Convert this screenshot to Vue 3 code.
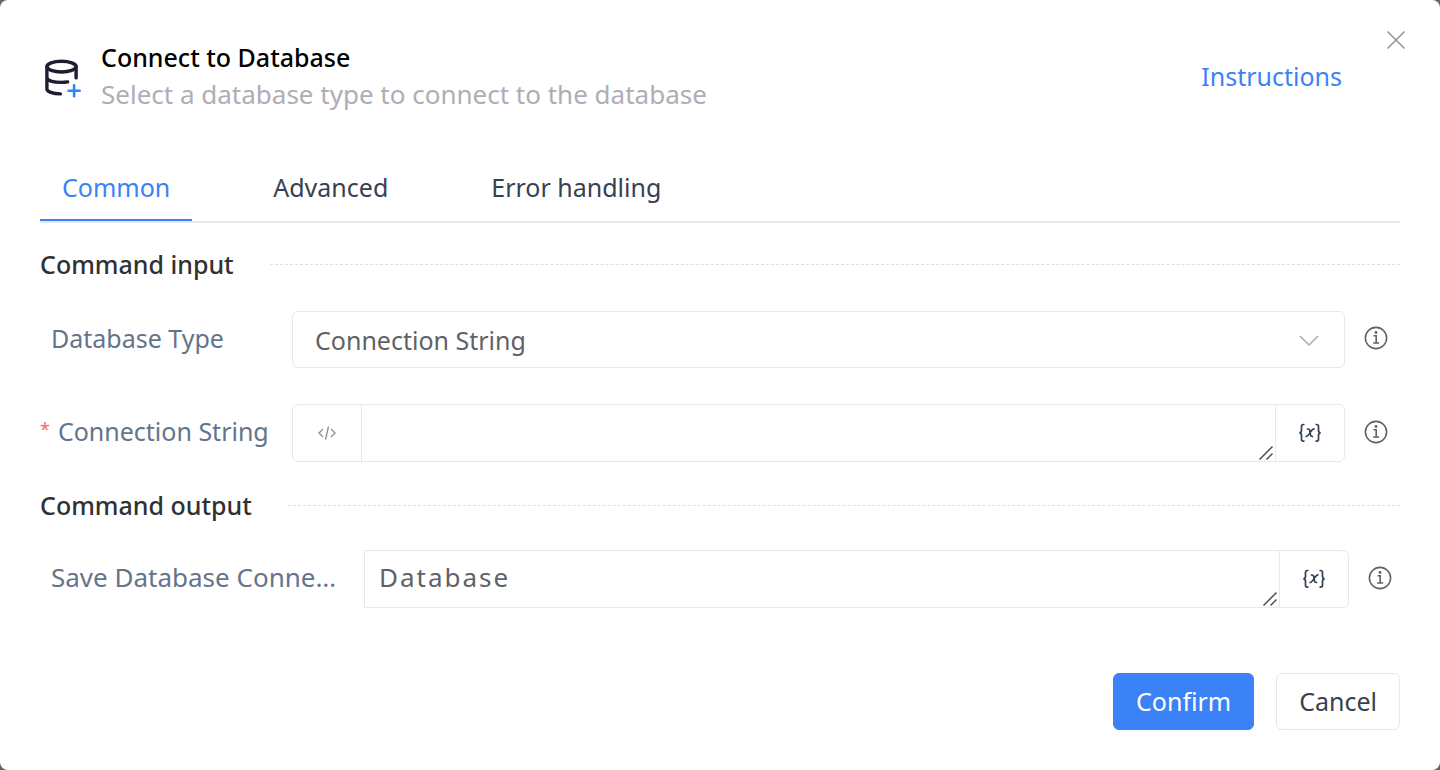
<script setup>
import { ref } from 'vue'

const tabs = ['Common', 'Advanced', 'Error handling']
const activeTab = ref('Common')
const databaseType = ref('Connection String')
const connectionString = ref('')
const outputName = ref('Database')
</script>

<template>
  <main class="dialog" role="dialog" aria-labelledby="dialog-title">
    <button class="close" type="button" aria-label="Close">
      <svg width="20" height="20" viewBox="0 0 20 20" fill="none" stroke="#909399" stroke-width="1.5">
        <path d="M1.5 1.5l17 17M18.5 1.5l-17 17" />
      </svg>
    </button>

    <header class="header">
      <svg class="db-icon" width="44" height="44" viewBox="0 0 44 44" fill="none" stroke="#211d30" stroke-width="3.4" stroke-linecap="round">
        <ellipse cx="21.5" cy="11.6" rx="14.6" ry="5.400" />
        <path d="M6.900 12v22.500c0 2.600 5.500 4.800 13.500 5M36.100 12v11.500M6.900 23.500c1 2.800 7 4.500 14.600 4.500 2.100 0 4.200-.2 6.200-.5" transform="translate(0 -.6)" />
        <path d="M34.100 30.300v11M28.500 35.800h11.200" stroke="#2d83ff" stroke-width="2.600" />
      </svg>
      <div class="titles">
        <h1 id="dialog-title">Connect to Database</h1>
        <p>Select a database type to connect to the database</p>
      </div>
      <a class="instructions" href="#instructions">Instructions</a>
    </header>

    <nav class="tabs" role="tablist">
      <button
        v-for="tab in tabs"
        :key="tab"
        type="button"
        role="tab"
        :aria-selected="tab === activeTab"
        :class="['tab', { active: tab === activeTab }]"
        @click="activeTab = tab"
      >{{ tab }}</button>
    </nav>

    <form class="form" @submit.prevent>
      <h2 class="section">Command input</h2>

      <div class="row">
        <label class="label" for="db-type">Database Type</label>
        <div class="control select">
          <select id="db-type" v-model="databaseType">
            <option>Connection String</option>
          </select>
          <svg class="chevron" width="20" height="12" viewBox="0 0 20 12" fill="none" stroke="#a8abb2" stroke-width="1.5">
            <path d="M1 1l9 9 9-9" />
          </svg>
        </div>
        <button class="info" type="button" aria-label="About Database Type">
          <svg width="24" height="24" viewBox="0 0 24 24" fill="none" stroke="#606266" stroke-width="1.6">
            <circle cx="12" cy="12" r="10.6" />
            <path d="M9.5 9.7h2.700v7.300M9.200 17h6" />
            <circle cx="12" cy="6.500" r="1.400" fill="#606266" stroke="none" />
          </svg>
        </button>
      </div>

      <div class="row">
        <label class="label required" for="conn-string"><span class="star">*</span>Connection String</label>
        <div class="control">
          <span class="prefix">
            <svg width="20" height="16" viewBox="0 0 20 16" fill="none" stroke="#909399" stroke-width="1.4">
              <path d="M6 4L2 8l4 4M14 4l4 4-4 4M11.500 1.500l-3 13" />
            </svg>
          </span>
          <div class="area">
            <textarea id="conn-string" v-model="connectionString" rows="1"></textarea>
            <svg class="grip" width="16" height="16" viewBox="0 0 16 16" fill="none" stroke="#4c4d4f" stroke-width="1.5">
              <path d="M1.500 14.500l13-13M8.500 14.500l6-6" />
            </svg>
          </div>
          <button class="variable" type="button" aria-label="Insert variable">
            <svg width="24" height="20" viewBox="0 0 24 20" fill="none" stroke="#334155" stroke-width="1.7">
              <path d="M6.500 1.500H5.300c-1.200 0-1.800.7-1.800 1.900v3.900c0 1.600-.6 2.500-2.200 2.500 1.600 0 2.200.9 2.200 2.500v3.900c0 1.200.6 1.900 1.800 1.900h1.200M17.500 1.500h1.200c1.200 0 1.800.7 1.800 1.900v3.900c0 1.600.6 2.500 2.200 2.500-1.600 0-2.200.9-2.200 2.500v3.900c0 1.200-.6 1.900-1.800 1.900h-1.200" />
              <path d="M8.800 6h1.400c.8 0 1.200.4 1.400 1.200l1 5c.2.900.6 1.300 1.400 1.300h1.200M16.500 5.900c-1.600-.3-2.700 1-4.300 3.500-1.800 2.900-2.800 4.500-4.700 4.100" />
            </svg>
          </button>
        </div>
        <button class="info" type="button" aria-label="About Connection String">
          <svg width="24" height="24" viewBox="0 0 24 24" fill="none" stroke="#606266" stroke-width="1.6">
            <circle cx="12" cy="12" r="10.6" />
            <path d="M9.5 9.7h2.700v7.300M9.200 17h6" />
            <circle cx="12" cy="6.500" r="1.400" fill="#606266" stroke="none" />
          </svg>
        </button>
      </div>

      <h2 class="section output-section">Command output</h2>

      <div class="row output">
        <label class="label" for="save-as">Save Database Conne…</label>
        <div class="control">
          <div class="area">
            <textarea id="save-as" v-model="outputName" rows="1"></textarea>
            <svg class="grip" width="16" height="16" viewBox="0 0 16 16" fill="none" stroke="#4c4d4f" stroke-width="1.5">
              <path d="M1.500 14.500l13-13M8.500 14.500l6-6" />
            </svg>
          </div>
          <button class="variable" type="button" aria-label="Insert variable">
            <svg width="24" height="20" viewBox="0 0 24 20" fill="none" stroke="#334155" stroke-width="1.7">
              <path d="M6.500 1.500H5.300c-1.200 0-1.800.7-1.800 1.900v3.900c0 1.600-.6 2.500-2.200 2.500 1.600 0 2.200.9 2.200 2.500v3.900c0 1.200.6 1.900 1.800 1.900h1.200M17.500 1.500h1.200c1.200 0 1.800.7 1.800 1.900v3.900c0 1.600.6 2.500 2.200 2.500-1.600 0-2.200.9-2.200 2.500v3.900c0 1.200-.6 1.900-1.800 1.900h-1.200" />
              <path d="M8.800 6h1.400c.8 0 1.200.4 1.400 1.200l1 5c.2.900.6 1.300 1.400 1.300h1.200M16.500 5.900c-1.600-.3-2.700 1-4.300 3.500-1.800 2.900-2.800 4.500-4.700 4.100" />
            </svg>
          </button>
        </div>
        <button class="info" type="button" aria-label="About the saved object">
          <svg width="24" height="24" viewBox="0 0 24 24" fill="none" stroke="#606266" stroke-width="1.6">
            <circle cx="12" cy="12" r="10.6" />
            <path d="M9.5 9.7h2.700v7.300M9.200 17h6" />
            <circle cx="12" cy="6.500" r="1.400" fill="#606266" stroke="none" />
          </svg>
        </button>
      </div>

      <footer class="footer">
        <button class="btn primary" type="submit">Confirm</button>
        <button class="btn" type="button">Cancel</button>
      </footer>
    </form>
  </main>
</template>

<style>
body {
  background: #666;
}
</style>

<style scoped>
.dialog,
.dialog * {
  box-sizing: border-box;
}
.dialog {
  position: relative;
  display: flex;
  flex-direction: column;
  min-height: 100vh;
  padding: 40px;
  border-radius: 8px;
  background: #fff;
  font-family: "Noto Sans", "Open Sans", sans-serif;
  font-size: 25px;
  line-height: 36px;
  color: #374151;
}
h1,
h2,
p {
  margin: 0;
}
button,
select,
textarea {
  margin: 0;
  padding: 0;
  border: 0;
  background: none;
  font: inherit;
  color: inherit;
}
svg {
  display: block;
}
.close {
  position: absolute;
  top: 30px;
  right: 34px;
}
.header {
  display: flex;
  align-items: center;
  padding-right: 58px;
}
.db-icon {
  flex: none;
  margin-right: 17px;
}
.titles {
  flex: 1;
}
h1 {
  font-size: 25px;
  font-weight: 500;
  line-height: 34px;
  color: #000;
}
.titles p {
  font-size: 26px;
  line-height: 40px;
  color: #afadb5;
}
.instructions {
  padding-bottom: 2px;
  color: #3b82f6;
  text-decoration: none;
}
.tabs {
  display: flex;
  gap: 59px;
  margin-top: 40px;
  border-bottom: 2px solid #e4e7ed;
}
.tab {
  height: 67px;
  padding: 0 22px;
  border-bottom: 2px solid transparent;
}
.tab.active {
  border-color: #3b82f6;
  color: #3b82f6;
}
.form {
  display: flex;
  flex: 1;
  flex-direction: column;
}
.section {
  display: flex;
  align-items: center;
  gap: 36px;
  margin: 23px 0 29px;
  font-size: 25px;
  font-weight: 500;
  color: #303133;
}
.output-section {
  margin: 25px 0 27px;
}
.section::after {
  content: "";
  flex: 1;
  border-top: 1px dashed #dcdfe6;
}
.row {
  display: flex;
  align-items: center;
}
.row + .row {
  margin-top: 36px;
}
.label {
  flex: none;
  width: 252px;
  padding: 0 0 4px 11px;
  color: #64748b;
  white-space: nowrap;
}
.label.required {
  display: flex;
  padding-left: 0;
}
.star {
  margin-right: 8px;
  font-size: 18px;
  line-height: 32px;
  color: #f56c6c;
}
.output .label {
  width: 300px;
  margin-right: 24px;
  font-size: 26px;
}
.control {
  position: relative;
  display: flex;
  flex: 1;
  height: 58px;
  border: 1px solid #e4e7ed;
  border-radius: 6px;
  color: #606266;
}
.control.select {
  height: 57px;
}
.select select {
  flex: 1;
  appearance: none;
  padding: 0 22px;
}
.chevron {
  position: absolute;
  top: 23px;
  right: 25px;
  pointer-events: none;
}
.prefix,
.variable {
  display: flex;
  align-items: center;
  justify-content: center;
  width: 69px;
}
.prefix {
  border-right: 1px solid #e4e7ed;
}
.variable {
  border-left: 1px solid #e4e7ed;
}
.area {
  position: relative;
  display: flex;
  flex: 1;
}
.area textarea {
  flex: 1;
  padding: 8px 14px;
  resize: none;
  overflow: hidden;
  font-size: 26px;
  letter-spacing: 2px;
}
.grip {
  position: absolute;
  right: 1px;
  bottom: 0;
}
.info {
  margin: 0 12px 3px 19px;
}
.output .control {
  border-radius: 0 6px 6px 0;
}
.output .info {
  margin: 0 8px 3px 19px;
}
.footer {
  display: flex;
  justify-content: flex-end;
  gap: 22px;
  margin-top: auto;
  padding-top: 40px;
}
.btn {
  height: 57px;
  padding: 0 22px 2px;
  border: 1px solid #e4e7ed;
  border-radius: 6px;
}
.btn.primary {
  border-color: #3b82f6;
  background: #3b82f6;
  color: #fff;
}
</style>
